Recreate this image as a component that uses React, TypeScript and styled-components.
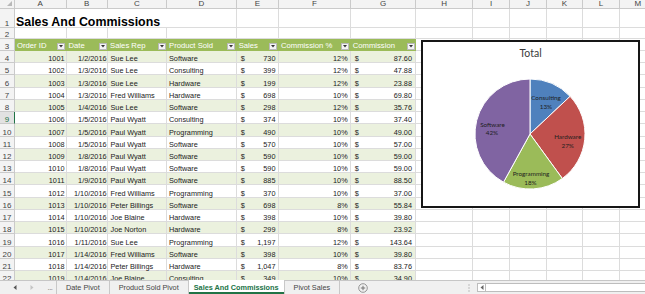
import React from 'react';
import styled, { createGlobalStyle, css } from 'styled-components';

const GlobalStyle = createGlobalStyle`
  html, body { margin: 0; padding: 0; background: #fff; overflow: hidden; }
  body { font-family: "Liberation Sans", Arial, sans-serif; }
  #root { width: 645px; height: 294px; }
`;

const COLS =
  '15px 51.5px 41.5px 59px 69.7px 42.3px 71.7px 65.8px 56.5px 37.5px 36.2px 36.3px 37px 37px';
const GRID = '#DCDCDC';
const HEAD_BG = '#F3F3F3';
const HEAD_LINE = '#CACACA';
const GREEN = '#9BBB59';
const BAND = '#EBF1DE';
const XL_GREEN = '#217346';

const Window = styled.div`
  width: 645px;
  height: 294px;
  display: flex;
  flex-direction: column;
  overflow: hidden;
`;

const Sheet = styled.div`
  position: relative;
  height: 280px;
  flex: none;
  overflow: hidden;
`;

const Row = styled.div<{ $h: number }>`
  display: grid;
  grid-template-columns: ${COLS};
  height: ${(p) => p.$h}px;
`;

const ColHead = styled.div`
  box-sizing: border-box;
  background: ${HEAD_BG};
  border-right: 1px solid ${HEAD_LINE};
  border-bottom: 1px solid ${HEAD_LINE};
  display: flex;
  align-items: center;
  justify-content: center;
  font-size: 8px;
  line-height: 8px;
  color: #444;
`;

const Corner = styled(ColHead)`
  justify-content: flex-end;
  align-items: flex-end;
  padding: 0 2px 2px 0;
`;

const RowHead = styled.div<{ $sel?: boolean }>`
  box-sizing: border-box;
  background: ${(p) => (p.$sel ? '#E2E2E2' : HEAD_BG)};
  border-right: 1px solid ${(p) => (p.$sel ? XL_GREEN : HEAD_LINE)};
  border-bottom: 1px solid ${HEAD_LINE};
  color: ${(p) => (p.$sel ? XL_GREEN : '#444')};
  display: flex;
  align-items: flex-end;
  justify-content: center;
  font-size: 8px;
  line-height: 6px;
`;

const Cell = styled.div<{ $fill?: string; $right?: boolean; $padL?: number; $padR?: number; $split?: boolean }>`
  box-sizing: border-box;
  border-right: 1px solid ${GRID};
  border-bottom: 1px solid ${GRID};
  background: ${(p) => p.$fill ?? '#fff'};
  display: flex;
  align-items: flex-end;
  justify-content: ${(p) => (p.$split ? 'space-between' : p.$right ? 'flex-end' : 'flex-start')};
  padding: 0 ${(p) => p.$padR ?? 2}px 0 ${(p) => p.$padL ?? 2}px;
  font-size: 7.3px;
  line-height: 6px;
  color: #222;
  white-space: nowrap;
`;

const TitleCell = styled(Cell)`
  grid-column: span 3;
  border-right: none;
  font-size: 12.4px;
  font-weight: bold;
  line-height: 10px;
  color: #000;
  padding-left: 1px;
`;

const HeadCell = styled.div`
  box-sizing: border-box;
  background: ${GREEN};
  display: flex;
  align-items: flex-end;
  justify-content: space-between;
  padding: 0 1.5px 1px 2px;
  color: #fff;
  font-size: 7.7px;
  line-height: 8px;
  white-space: nowrap;
`;

const DropBtn = styled.span`
  flex: none;
  width: 8px;
  height: 7px;
  box-sizing: border-box;
  background: #F4F4F4;
  border: 1px solid #B9B9B9;
  display: flex;
  align-items: center;
  justify-content: center;
`;

/* ---------- chart ---------- */
const ChartBox = styled.div`
  position: absolute;
  left: 421px;
  top: 40px;
  width: 219px;
  height: 168px;
  box-sizing: border-box;
  border: 2px solid #161616;
  background: #fff;
  display: flex;
  flex-direction: column;
`;

const ChartTitle = styled.div`
  height: 22px;
  flex: none;
  display: flex;
  align-items: center;
  justify-content: center;
  font-family: Lato, "Open Sans", sans-serif;
  font-size: 10.5px;
  color: #3a3a3a;
`;

const PieLabel = styled.text`
  font-family: Lato, "Open Sans", sans-serif;
  font-size: 6.3px;
  fill: #1e1e1e;
`;

/* ---------- tab bar ---------- */
const TabBar = styled.div`
  height: 14px;
  flex: none;
  box-sizing: border-box;
  display: flex;
  align-items: stretch;
  background: #F0F0F0;
  border-top: 1px solid #C6C6C6;
  font-size: 7.3px;
  color: #444;
`;

const Nav = styled.div`
  width: 57px;
  flex: none;
  box-sizing: border-box;
  display: flex;
  align-items: center;
  gap: 7px;
  padding-left: 10px;
  border-right: 1px solid #C8C8C8;
`;

const NavBtn = styled.span<{ $dim?: boolean }>`
  width: 10px;
  display: flex;
  justify-content: center;
  color: ${(p) => (p.$dim ? '#BDBDBD' : '#555')};
`;

const Ellipsis = styled.span`
  width: 12px;
  text-align: center;
  color: #666;
  letter-spacing: -0.3px;
`;

const Tab = styled.div<{ $active?: boolean }>`
  display: flex;
  align-items: center;
  padding: 0 9px;
  border-right: 1px solid #C8C8C8;
  white-space: nowrap;
  ${(p) =>
    p.$active &&
    css`
      padding: 0 5px;
      margin-top: -1px;
      background: #fff;
      color: ${XL_GREEN};
      font-weight: bold;
      box-shadow: inset 0 -2px 0 ${XL_GREEN};
    `}
`;

const AddBtn = styled.span`
  margin-left: 18px;
  display: flex;
  align-items: center;
`;

const Spacer = styled.div`
  flex: 1;
`;

const ScrollArea = styled.div`
  width: 181px;
  flex: none;
  display: flex;
  align-items: center;
`;

const Grip = styled.span`
  width: 9px;
  display: flex;
  justify-content: center;
  margin-right: 4px;
`;

const ScrollTrack = styled.div`
  flex: 1;
  height: 9px;
  box-sizing: border-box;
  border: 1px solid #BDBDBD;
  border-right: none;
  background: #fff;
  display: flex;
`;

const ScrollBtn = styled.span`
  width: 8px;
  box-sizing: border-box;
  border-right: 1px solid #BDBDBD;
  display: flex;
  align-items: center;
  justify-content: center;
`;

type Rec = [string, string, string, string, string, string, string];
const DATA: Rec[] = [
  ['1001', '1/2/2016', 'Sue Lee', 'Software', '730', '12%', '87.60'],
  ['1002', '1/3/2016', 'Sue Lee', 'Consulting', '399', '12%', '47.88'],
  ['1003', '1/3/2016', 'Sue Lee', 'Hardware', '199', '12%', '23.88'],
  ['1004', '1/3/2016', 'Fred Williams', 'Hardware', '698', '10%', '69.80'],
  ['1005', '1/4/2016', 'Sue Lee', 'Software', '298', '12%', '35.76'],
  ['1006', '1/5/2016', 'Paul Wyatt', 'Consulting', '374', '10%', '37.40'],
  ['1007', '1/5/2016', 'Paul Wyatt', 'Programming', '490', '10%', '49.00'],
  ['1008', '1/5/2016', 'Paul Wyatt', 'Software', '570', '10%', '57.00'],
  ['1009', '1/8/2016', 'Paul Wyatt', 'Software', '590', '10%', '59.00'],
  ['1010', '1/8/2016', 'Paul Wyatt', 'Software', '590', '10%', '59.00'],
  ['1011', '1/9/2016', 'Paul Wyatt', 'Software', '885', '10%', '88.50'],
  ['1012', '1/10/2016', 'Fred Williams', 'Programming', '370', '10%', '37.00'],
  ['1013', '1/10/2016', 'Peter Billings', 'Software', '698', '8%', '55.84'],
  ['1014', '1/10/2016', 'Joe Blaine', 'Hardware', '398', '10%', '39.80'],
  ['1015', '1/10/2016', 'Joe Norton', 'Hardware', '299', '8%', '23.92'],
  ['1016', '1/11/2016', 'Sue Lee', 'Programming', '1,197', '12%', '143.64'],
  ['1017', '1/14/2016', 'Fred Williams', 'Software', '398', '10%', '39.80'],
  ['1018', '1/14/2016', 'Peter Billings', 'Hardware', '1,047', '8%', '83.76'],
  ['1019', '1/14/2016', 'Joe Blaine', 'Consulting', '349', '10%', '34.90'],
];

const LETTERS = ['A', 'B', 'C', 'D', 'E', 'F', 'G', 'H', 'I', 'J', 'K', 'L', 'M'];
const HEADERS = ['Order ID', 'Date', 'Sales Rep', 'Product Sold', 'Sales', 'Commission %', 'Commission'];

const Empty = ({ n }: { n: number }) => (
  <>
    {Array.from({ length: n }, (_, i) => (
      <Cell key={i} />
    ))}
  </>
);

const DownArrow = () => (
  <svg width="4" height="3" viewBox="0 0 4 3">
    <path d="M0 0H4L2 2.5Z" fill="#333" />
  </svg>
);

const Tri = ({ dir, color }: { dir: 'l' | 'r'; color: string }) => (
  <svg width="4" height="5" viewBox="0 0 4 5">
    <path d={dir === 'l' ? 'M3.5 0V5L0.5 2.5Z' : 'M0.5 0V5L3.5 2.5Z'} fill={color} />
  </svg>
);

const Pie = () => {
  const cx = 107;
  const cy = 70;
  return (
    <svg width="215" height="142" viewBox="0 0 215 142">
      <g stroke="#fff" strokeWidth="1" strokeLinejoin="round">
        <path d={`M${cx} ${cy}L107 15A55 55 0 0 1 147.09 32.35Z`} fill="#4F81BD" />
        <path d={`M${cx} ${cy}L147.09 32.35A55 55 0 0 1 139.33 114.5Z`} fill="#C0504D" />
        <path d={`M${cx} ${cy}L139.33 114.5A55 55 0 0 1 80.5 118.2Z`} fill="#9BBB59" />
        <path d={`M${cx} ${cy}L80.5 118.2A55 55 0 0 1 107 15Z`} fill="#8064A2" />
      </g>
      <g textAnchor="middle">
        <PieLabel x="123" y="35.5">Consulting</PieLabel>
        <PieLabel x="123" y="44.5">13%</PieLabel>
        <PieLabel x="144.7" y="75">Hardware</PieLabel>
        <PieLabel x="144.7" y="84">27%</PieLabel>
        <PieLabel x="108" y="111.5">Programming</PieLabel>
        <PieLabel x="107.5" y="120.5">18%</PieLabel>
        <PieLabel x="69.5" y="62.5">Software</PieLabel>
        <PieLabel x="69" y="71">42%</PieLabel>
      </g>
    </svg>
  );
};

export default function App() {
  return (
    <>
      <GlobalStyle />
      <Window>
        <Sheet>
          <Row $h={9}>
            <Corner>
              <svg width="5" height="5" viewBox="0 0 5 5">
                <path d="M5 0V5H0Z" fill="#B8B8B8" />
              </svg>
            </Corner>
            {LETTERS.map((l) => (
              <ColHead key={l}>{l}</ColHead>
            ))}
          </Row>
          <Row $h={19}>
            <RowHead>1</RowHead>
            <TitleCell>Sales And Commissions</TitleCell>
            <Empty n={10} />
          </Row>
          <Row $h={11}>
            <RowHead>2</RowHead>
            <Empty n={13} />
          </Row>
          <Row $h={12}>
            <RowHead>3</RowHead>
            {HEADERS.map((h) => (
              <HeadCell key={h}>
                <span>{h}</span>
                <DropBtn>
                  <DownArrow />
                </DropBtn>
              </HeadCell>
            ))}
            <Empty n={6} />
          </Row>
          {DATA.map((r, i) => {
            const rowNo = i + 4;
            const fill = rowNo % 2 === 0 ? BAND : '#fff';
            return (
              <Row $h={12.22} key={r[0]}>
                <RowHead $sel={rowNo === 9}>{rowNo}</RowHead>
                <Cell $fill={fill} $right $padR={1}>{r[0]}</Cell>
                <Cell $fill={fill} $right $padR={0.5}>{r[1]}</Cell>
                <Cell $fill={fill} $padL={2.5}>{r[2]}</Cell>
                <Cell $fill={fill} $padL={2}>{r[3]}</Cell>
                <Cell $fill={fill} $split $padL={4} $padR={2.5}>
                  <span>$</span>
                  <span>{r[4]}</span>
                </Cell>
                <Cell $fill={fill} $right $padR={2}>{r[5]}</Cell>
                <Cell $fill={fill} $split $padL={4} $padR={3.5}>
                  <span>$</span>
                  <span>{r[6]}</span>
                </Cell>
                <Empty n={6} />
              </Row>
            );
          })}
          <ChartBox>
            <ChartTitle>Total</ChartTitle>
            <Pie />
          </ChartBox>
        </Sheet>
        <TabBar>
          <Nav>
            <NavBtn>
              <Tri dir="l" color="#555" />
            </NavBtn>
            <NavBtn $dim>
              <Tri dir="r" color="#C4C4C4" />
            </NavBtn>
            <Ellipsis>...</Ellipsis>
          </Nav>
          <Tab>Date Pivot</Tab>
          <Tab>Product Sold Pivot</Tab>
          <Tab $active>Sales And Commissions</Tab>
          <Tab>Pivot Sales</Tab>
          <AddBtn>
            <svg width="10" height="10" viewBox="0 0 10 10">
              <circle cx="5" cy="5" r="4.3" fill="none" stroke="#8A8A8A" strokeWidth="0.9" />
              <path d="M5 2.8V7.2M2.8 5H7.2" stroke="#6A6A6A" strokeWidth="0.9" />
            </svg>
          </AddBtn>
          <Spacer />
          <ScrollArea>
            <Grip>
              <svg width="2" height="8" viewBox="0 0 2 8">
                <circle cx="1" cy="1" r="0.7" fill="#AAA" />
                <circle cx="1" cy="4" r="0.7" fill="#AAA" />
                <circle cx="1" cy="7" r="0.7" fill="#AAA" />
              </svg>
            </Grip>
            <ScrollTrack>
              <ScrollBtn>
                <Tri dir="l" color="#666" />
              </ScrollBtn>
            </ScrollTrack>
          </ScrollArea>
        </TabBar>
      </Window>
    </>
  );
}
